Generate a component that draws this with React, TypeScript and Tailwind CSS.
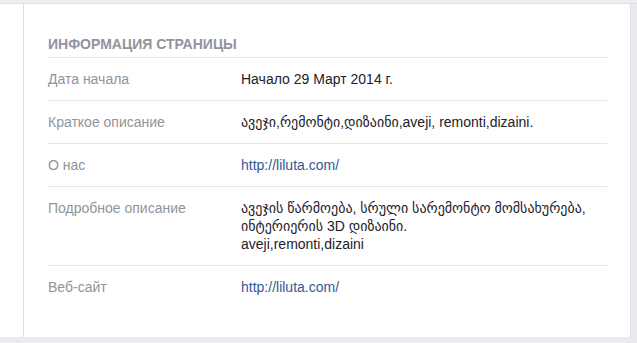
const rows: { label: string; value: string[]; link?: boolean }[] = [
  { label: 'Дата начала', value: ['Начало 29 Март 2014 г.'] },
  { label: 'Краткое описание', value: ['ავეჯი,რემონტი,დიზაინი,aveji, remonti,dizaini.'] },
  { label: 'О нас', value: ['http://liluta.com/'], link: true },
  {
    label: 'Подробное описание',
    value: [
      'ავეჯის წარმოება, სრული სარემონტო მომსახურება,',
      'ინტერიერის 3D დიზაინი.',
      'aveji,remonti,dizaini',
    ],
  },
  { label: 'Веб-сайт', value: ['http://liluta.com/'], link: true },
];

export default function App() {
  return (
    <div
      className="w-[637px] h-[343px] bg-[#e9ebee] flex flex-col overflow-hidden text-[14px]"
      style={{ fontFamily: '"Liberation Sans", "DejaVu Sans", Arial, sans-serif' }}
    >
      <div className="h-[4px] bg-[#eceef1] border-b border-[#dddfe2]" />
      <div className="flex h-[333px]">
        <div className="w-[24px] bg-white border-r border-[#dddfe2]" />
        <div className="w-[606px] bg-white pl-[24px] pr-[23px] pt-[31px]">
          <h3 className="font-bold text-[#90949c] leading-[18px] pb-[4px] border-b border-[#e5e6e9]">
            ИНФОРМАЦИЯ СТРАНИЦЫ
          </h3>
          {rows.map((row, idx) => (
            <div
              key={idx}
              className={`flex py-[12px] leading-[18px] ${idx < rows.length - 1 ? 'border-b border-[#e5e6e9]' : ''}`}
            >
              <div className="w-[193px] shrink-0 text-[#90949c]">{row.label}</div>
              <div className={row.link ? 'text-[#365899]' : 'text-[#1d2129]'}>
                {row.value.map((line, i) => (
                  <div key={i}>{line}</div>
                ))}
              </div>
            </div>
          ))}
        </div>
        <div className="flex-1 bg-[#e9ebee] border-l border-[#dddfe2]" />
      </div>
    </div>
  );
}
